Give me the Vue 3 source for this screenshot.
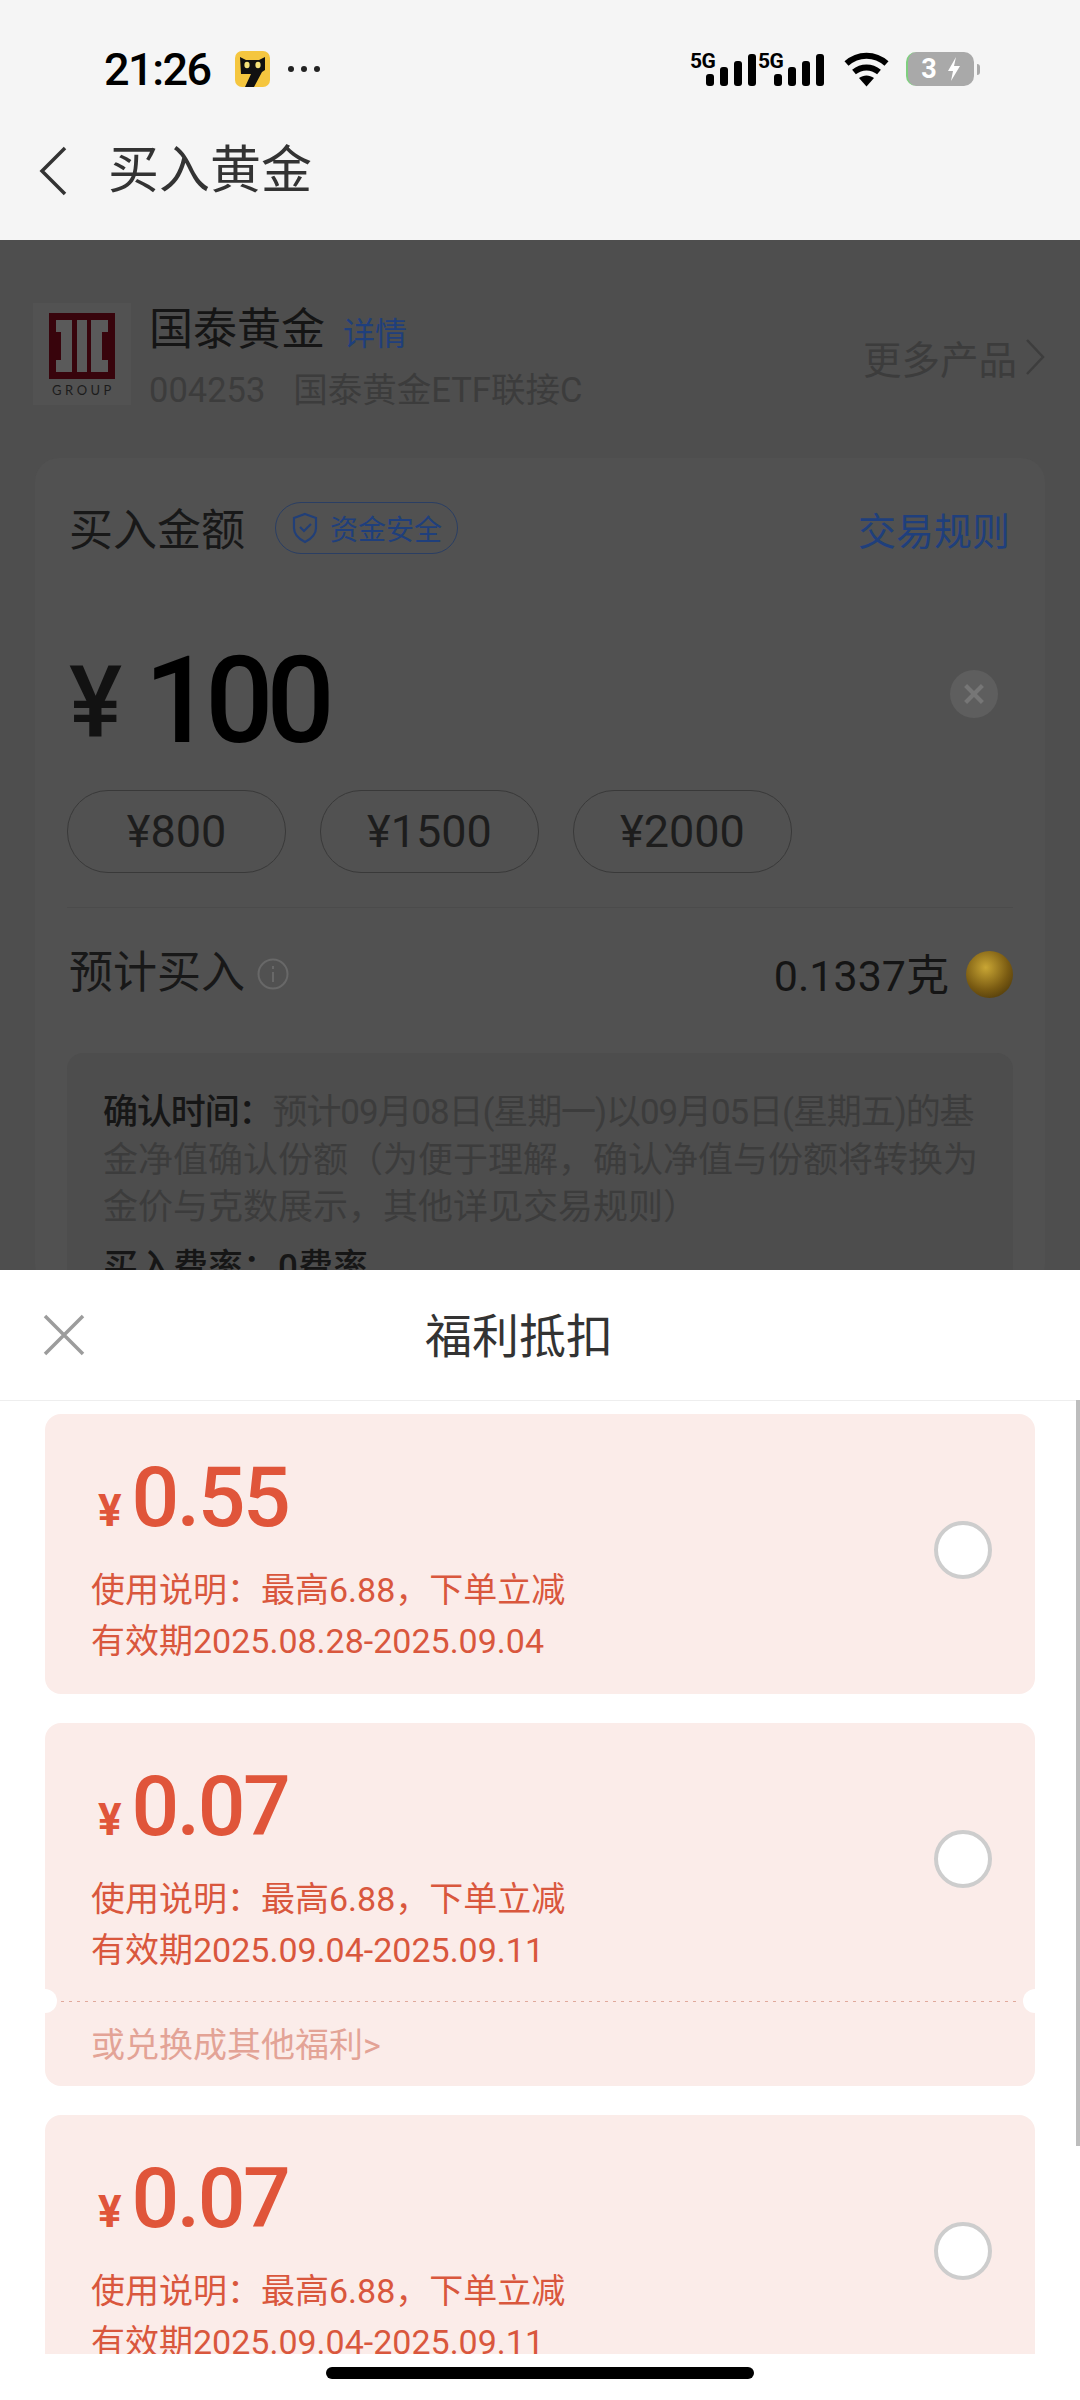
<template>
  <div class="phone">
    <header class="top">
      <div class="status">
        <span class="time">21:26</span>
        <svg class="cat" viewBox="0 0 35 36">
          <rect width="35" height="36" rx="7" fill="#f5c63f" />
          <path d="M5 6l6 3h13l6-3v13l-3 2-8 15H10l6-13H6z" fill="#111" />
          <ellipse cx="12" cy="14" rx="2.600" ry="3.200" fill="#f5e27a" />
          <ellipse cx="23" cy="14" rx="2.600" ry="3.200" fill="#f5e27a" />
        </svg>
        <span class="dots"><i></i><i></i><i></i></span>
        <div class="sys">
          <div v-for="n in 2" :key="n" class="net">
            <span class="net-label">5G</span>
            <span class="bars">
              <i v-for="h in barHeights" :key="h" :style="{ height: h + 'px' }"></i>
            </span>
          </div>
          <svg class="wifi" viewBox="0 0 45 35">
            <path d="M2.500 11.500C14 1 31 1 42.500 11.500" fill="none" stroke="#000" stroke-width="6" />
            <path d="M10 20c7.500-6 17.500-6 25 0" fill="none" stroke="#000" stroke-width="6" />
            <path d="M15 26c4.500-3.500 10.500-3.500 15 0l-7.500 8.500z" fill="#000" />
          </svg>
          <div class="battery">
            <span class="batt-body">
              <b>3</b>
              <svg viewBox="0 0 14 24"><path d="M9 0L1 14h5l-2 10 9-15H7z" fill="#fff" /></svg>
            </span>
            <i class="batt-nub"></i>
          </div>
        </div>
      </div>
      <div class="nav">
        <svg class="back" viewBox="0 0 30 50">
          <path d="M27 2L4 25l23 23" fill="none" stroke="#333" stroke-width="3.500" />
        </svg>
        <span class="nav-title">买入黄金</span>
      </div>
    </header>

    <section class="dimmed">
      <div class="fund">
        <div class="logo">
          <svg viewBox="0 0 66 66" class="logo-mark">
            <rect width="66" height="66" fill="#38040c" />
            <path d="M7 7h16v52H7V47h5V19H7zM28 7h10v52H28zM42 7h17v12h-6v28h6v12H42z" fill="#5a5a5a" />
          </svg>
          <span class="logo-text">GROUP</span>
        </div>
        <div class="fund-info">
          <div class="fund-name">国泰黄金<span class="link detail">详情</span></div>
          <div class="fund-sub"><span>004253</span><span>国泰黄金ETF联接C</span></div>
        </div>
        <div class="more">
          更多产品
          <svg viewBox="0 0 20 38"><path d="M2 2l16 17L2 36" fill="none" stroke="#3d3d3d" stroke-width="2.500" /></svg>
        </div>
      </div>

      <div class="panel">
        <div class="panel-head">
          <span class="panel-title">买入金额</span>
          <span class="safe">
            <svg viewBox="0 0 28 32">
              <path d="M14 2l11 4v10c0 7-5 11-11 14C8 27 3 23 3 16V6z" fill="none" stroke="#213f78" stroke-width="2.200" />
              <path d="M9 15l4 4 7-7" fill="none" stroke="#213f78" stroke-width="2.200" />
            </svg>
            资金安全
          </span>
          <span class="link rules">交易规则</span>
        </div>

        <div class="amount">
          <span class="yen">¥</span>
          <span class="value">100</span>
          <span class="clear">
            <svg viewBox="0 0 20 20"><path d="M3 3l14 14M17 3L3 17" stroke="#767676" stroke-width="3.500" /></svg>
          </span>
        </div>

        <div class="presets">
          <span v-for="p in presets" :key="p" class="preset">¥{{ p }}</span>
        </div>

        <div class="estimate">
          <span class="panel-title">预计买入</span>
          <svg class="info" viewBox="0 0 32 32">
            <circle cx="16" cy="16" r="14.500" fill="none" stroke="#686868" stroke-width="2" />
            <path d="M16 14v10M16 8v3" stroke="#686868" stroke-width="2" />
          </svg>
          <span class="grams">0.1337克</span>
          <span class="gold"></span>
        </div>

        <div class="note">
          <p>
            <span class="first-line"><strong>确认时间：</strong>预计09月08日(星期一)以09月05日(星期五)的基</span><br />金净值确认份额（为便于理解，确认净值与份额将转换为金价与克数展示，其他详见交易规则）
          </p>
          <p class="fee"><strong>买入费率：0费率</strong></p>
        </div>
      </div>
    </section>

    <section class="sheet">
      <div class="sheet-head">
        <svg class="close" viewBox="0 0 42 42">
          <path d="M2 2l38 38M40 2L2 40" stroke="#9c9c9c" stroke-width="3.500" />
        </svg>
        <span class="sheet-title">福利抵扣</span>
      </div>
      <div class="coupons">
        <article v-for="c in coupons" :key="c.id" class="coupon">
          <div class="coupon-main">
            <div class="coupon-text">
              <div class="price"><span class="price-yen">¥</span>{{ c.amount }}</div>
              <p class="desc">使用说明：最高6.88，下单立减</p>
              <p class="desc">有效期{{ c.period }}</p>
            </div>
            <span class="radio"></span>
          </div>
          <div v-if="c.exchange" class="exchange">或兑换成其他福利&gt;</div>
        </article>
      </div>
      <div class="home-area"><i class="home"></i></div>
      <i class="scrollbar"></i>
    </section>
  </div>
</template>

<script setup>
const barHeights = [12, 19, 25, 32]
const presets = [800, 1500, 2000]
const coupons = [
  { id: 1, amount: '0.55', period: '2025.08.28-2025.09.04', exchange: false },
  { id: 2, amount: '0.07', period: '2025.09.04-2025.09.11', exchange: true },
  { id: 3, amount: '0.07', period: '2025.09.04-2025.09.11', exchange: false },
]
</script>

<style>
html, body { margin: 0; background: #fff; }
</style>

<style scoped>
.phone {
  position: relative;
  width: 1080px;
  height: 2400px;
  overflow: hidden;
  display: flex;
  flex-direction: column;
  font-family: Roboto, "Noto Sans CJK SC", sans-serif;
  background: #fff;
}
p { margin: 0; }
i { display: block; }

/* top bar */
.top { height: 240px; background: #f5f5f5; flex: none; }
.status {
  height: 138px;
  padding: 0 100px 0 104px;
  display: flex;
  align-items: center;
  box-sizing: border-box;
}
.time { font-size: 45px; font-weight: 500; color: #000; width: 131px; letter-spacing: -1.500px; }
.cat { width: 35px; height: 36px; }
.dots { display: flex; gap: 7px; margin-left: 18px; }
.dots i { width: 6px; height: 6px; border-radius: 50%; background: #222; }
.sys { margin-left: auto; display: flex; align-items: center; }
.net { position: relative; width: 68px; height: 34px; }
.net-label {
  position: absolute;
  left: 0;
  top: -3px;
  font-size: 21px;
  font-weight: 700;
  color: #000;
  letter-spacing: -.5px;
}
.bars { position: absolute; left: 16px; bottom: 0; display: flex; align-items: flex-end; gap: 6px; }
.bars i { width: 8px; border-radius: 3px; background: #000; }
.wifi { width: 45px; height: 35px; margin-left: 18px; }
.battery { display: flex; align-items: center; margin-left: 17px; gap: 3px; }
.batt-body {
  width: 68px;
  height: 34px;
  border-radius: 10px;
  border-left: 2px solid #7fcf7f;
  box-sizing: border-box;
  background: #a9a9a9;
  color: #fff;
  display: flex;
  align-items: center;
  justify-content: center;
  gap: 10px;
  font-size: 27px;
}
.batt-body svg { width: 14px; height: 24px; }
.batt-nub { width: 3px; height: 11px; background: #a9a9a9; border-radius: 0 3px 3px 0; }
.nav { height: 60px; display: flex; align-items: center; }
.back { width: 30px; height: 50px; margin: 6px 0 0 38px; }
.nav-title { font-size: 51px; color: #333; margin: -5px 0 0 40px; }

/* page under the mask */
.dimmed { height: 1030px; flex: none; overflow: hidden; background: #4e4e4e; padding: 60px 35px 0; box-sizing: border-box; }
.fund { display: flex; align-items: flex-start; height: 158px; }
.logo {
  width: 98px;
  height: 102px;
  margin: 3px 0 0 -2px;
  background: #525252;
  display: flex;
  flex-direction: column;
  align-items: center;
  padding-top: 10px;
  box-sizing: border-box;
}
.logo-mark { width: 66px; height: 66px; }
.logo-text { font-size: 13px; line-height: 16px; letter-spacing: 3.500px; color: #1c1c1c; margin-top: 3px; font-family: Lato, sans-serif; margin-right: -3px; }
.fund-info { margin-left: 18px; }
.fund-name { font-size: 44px; line-height: 60px; color: #151515; }
.link { color: #1f3f7c; }
.detail { font-size: 32px; margin-left: 18px; }
.fund-sub { font-size: 34.500px; color: #3c3c3c; display: flex; gap: 28px; line-height: 46px; margin-top: 3px; }
.more {
  margin-left: auto;
  display: flex;
  align-items: center;
  gap: 8px;
  font-size: 38.500px;
  color: #3c3c3c;
  margin-top: 29px;
}
.more svg { width: 20px; height: 38px; }

.panel {
  height: 830px;
  background: #515151;
  border-radius: 24px;
  padding: 0 32px;
  box-sizing: border-box;
}
.panel-head { display: flex; align-items: center; padding-top: 40px; height: 60px; }
.panel-title { font-size: 44px; color: #181818; line-height: 60px; padding-left: 2px; }
.panel-head .panel-title { margin-top: 5px; }
.safe {
  margin-left: 30px;
  height: 52px;
  padding: 0 15px;
  border: 1px solid #2a3e63;
  border-radius: 26px;
  display: flex;
  align-items: center;
  gap: 11px;
  font-size: 28px;
  color: #1f3f7c;
  box-sizing: border-box;
}
.safe svg { width: 28px; height: 32px; }
.rules { margin-left: auto; font-size: 38px; margin-right: 3px; }
.amount { display: flex; align-items: center; height: 130px; margin-top: 80px; }
.yen { font-size: 100px; font-weight: 500; color: #121212; padding-left: 2px; line-height: 130px; }
.value { font-size: 120px; font-weight: 500; color: #000; margin-left: 22px; letter-spacing: -7px; line-height: 130px; margin-top: -4px; }
.clear {
  margin: -18px 15px 0 auto;
  width: 48px;
  height: 48px;
  border-radius: 50%;
  background: #5e5e5e;
  display: flex;
  align-items: center;
  justify-content: center;
}
.clear svg { width: 24px; height: 24px; }
.presets { display: flex; gap: 34px; margin-top: 22px; padding-bottom: 34px; border-bottom: 1px solid #4b4b4b; }
.preset {
  width: 219px;
  height: 83px;
  border: 1px solid #393939;
  border-radius: 41px;
  box-sizing: border-box;
  display: flex;
  align-items: center;
  justify-content: center;
  font-size: 45px;
  color: #1d1d1d;
}
.estimate { display: flex; align-items: center; height: 132px; }
.estimate .panel-title { margin-top: -2px; }
.info { width: 32px; height: 32px; margin-left: 12px; }
.grams { margin: -5px 0 0 auto; font-size: 43px; color: #151515; }
.gold {
  width: 47px;
  height: 47px;
  margin-left: 17px;
  border-radius: 50%;
  background: radial-gradient(circle at 42% 35%, #c9a634, #7a5b12 55%, #3a2a08);
}
.note {
  background: #4d4d4d;
  border-radius: 16px;
  padding: 36px 30px 0 36px;
  margin-top: 13px;
  font-size: 35px;
  line-height: 47.500px;
  color: #3c3c3c;
}
.first-line { letter-spacing: -1.100px; white-space: nowrap; }
.note strong { font-weight: 500; color: #161616; }
.fee { margin-top: 12px; }

/* bottom sheet */
.sheet { position: relative; flex: 1; background: #fff; display: flex; flex-direction: column; min-height: 0; }
.sheet-head {
  height: 131px;
  flex: none;
  border-bottom: 1px solid #eeeeee;
  box-sizing: border-box;
  display: flex;
  align-items: center;
  padding-left: 43px;
}
.close { width: 42px; height: 42px; }
.sheet-title { font-size: 47px; color: #333; margin: -6px 0 0 340px; }
.coupons {
  height: 953px;
  flex: none;
  overflow: hidden;
  padding: 13px 45px 0;
  box-sizing: border-box;
  display: flex;
  flex-direction: column;
  gap: 29px;
}
.coupon {
  flex: none;
  background: #fbece9;
  border-radius: 16px;
  position: relative;
  color: #d9573d;
}
.coupon-main {
  display: flex;
  justify-content: space-between;
  align-items: center;
  height: 280px;
  padding: 0 43px 0 46px;
  box-sizing: border-box;
}
.coupon-text { padding-top: 6px; }
.price { font-size: 84px; font-weight: 500; line-height: 100px; color: #e0553a; letter-spacing: -2.500px; margin-bottom: 4px; }
.price-yen { font-size: 44px; margin: 0 10px 0 7px; letter-spacing: 0; font-weight: 700; }
.desc { font-size: 34px; line-height: 51px; white-space: nowrap; }
.radio {
  width: 58px;
  height: 58px;
  margin-bottom: 8px;
  border: 4px solid #cdcdcd;
  border-radius: 50%;
  background: #fff;
  box-sizing: border-box;
}
.exchange {
  height: 85px;
  margin: -2px 16px 0;
  background: linear-gradient(to right, #e0a99c 3px, transparent 3px) top left / 8px 1px repeat-x;
  padding-left: 30px;
  font-size: 34px;
  line-height: 88px;
  color: #e3a396;
  position: relative;
}
.exchange::before,
.exchange::after {
  content: "";
  position: absolute;
  top: -12px;
  width: 24px;
  height: 24px;
  border-radius: 50%;
  background: #fff;
}
.exchange::before { left: -28px; }
.exchange::after { right: -28px; }
.home-area { flex: 1; display: flex; justify-content: center; padding-top: 13px; }
.home { width: 428px; height: 12px; border-radius: 6px; background: #000; }
.scrollbar { position: absolute; right: 0; top: 130px; width: 4px; height: 746px; background: #bdbdbd; }
</style>
